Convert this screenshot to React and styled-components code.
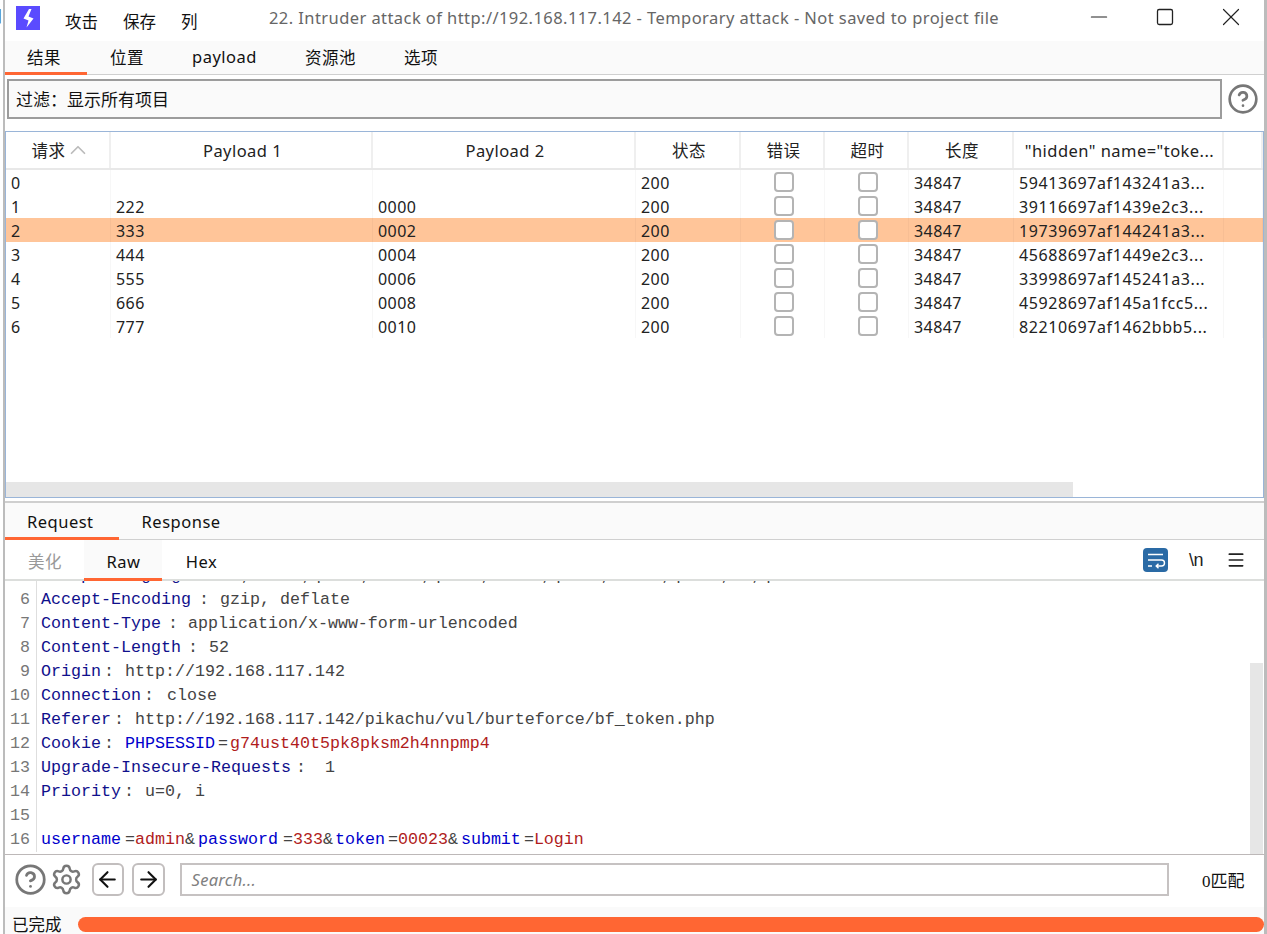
import React from 'react';
import styled, { createGlobalStyle } from 'styled-components';
import { ArrowLeft, ArrowRight, ChevronUp, CircleHelp, Menu, Minus, Settings, Square, X } from 'lucide-react';

const UI_FONT = '"Noto Sans", "Noto Sans CJK SC", sans-serif';
const ORANGE = '#ff6633';

const rows = [
    ['0', '', '', '59413697af143241a3...'],
    ['1', '222', '0000', '39116697af1439e2c3...'],
    ['2', '333', '0002', '19739697af144241a3...'],
    ['3', '444', '0004', '45688697af1449e2c3...'],
    ['4', '555', '0006', '33998697af145241a3...'],
    ['5', '666', '0008', '45928697af145a1fcc5...'],
    ['6', '777', '0010', '82210697af1462bbb5...'],
];

const headers = [
    { id: 'req', label: '请求', sort: true },
    { id: 'p1', label: 'Payload 1' },
    { id: 'p2', label: 'Payload 2' },
    { id: 'status', label: '状态' },
    { id: 'err', label: '错误' },
    { id: 'timeout', label: '超时' },
    { id: 'len', label: '长度' },
    { id: 'token', label: '"hidden" name="toke...' },
    { id: 'rest', label: '' },
];

const headerLines = [
    { n: 6, key: 'Accept-Encoding', gap: 29, indent: 8, value: 'gzip, deflate' },
    { n: 7, key: 'Content-Type', gap: 27, indent: 7, value: 'application/x-www-form-urlencoded' },
    { n: 8, key: 'Content-Length', gap: 28, indent: 7, value: '52' },
    { n: 9, key: 'Origin', gap: 24, indent: 3, value: 'http://192.168.117.142' },
    { n: 10, key: 'Connection', gap: 26, indent: 3, value: 'close' },
    { n: 11, key: 'Referer', gap: 24, indent: 3, value: 'http://192.168.117.142/pikachu/vul/burteforce/bf_token.php' },
];

const GlobalStyle = createGlobalStyle`
    html, body {
        margin: 0;
        padding: 0;
        background: #ffffff;
    }
`;

const Page = styled.div`
    width: 1267px;
    height: 934px;
    overflow: hidden;
    display: flex;
    position: relative;
    font-family: ${UI_FONT};
    color: #111;
    background: #fff;
`;

const BehindText = styled.span`
    position: absolute;
    left: -13px;
    top: 3px;
    font-size: 16px;
    color: #222;
`;

const Window = styled.div`
    margin-left: 3px;
    width: 1259px;
    flex: none;
    border-left: 2px solid #bcbcbc;
    border-right: 3px solid #bcbcbc;
    display: flex;
    flex-direction: column;
    height: 934px;
    position: relative;
    background: #fff;
`;

const TitleBar = styled.div`
    height: 41px;
    flex: none;
    display: flex;
    align-items: center;
    position: relative;
    background: #fff;
`;

const Logo = styled.svg`
    width: 24px;
    height: 24px;
    margin: -6px 0 0 11px;
    flex: none;
`;

const MenuList = styled.div`
    display: flex;
    gap: 25px;
    margin-left: 25px;
    font-size: 16.5px;
`;

const Title = styled.div`
    position: absolute;
    left: 264px;
    top: 6px;
    font-size: 16.5px;
    line-height: 24px;
    letter-spacing: 0.425px;
    color: #666;
    white-space: nowrap;
`;

const WindowControls = styled.div`
    position: absolute;
    top: 0;
    right: 0;
    display: flex;
    height: 33px;
    color: #222;
`;

const ControlSlot = styled.div`
    width: 66px;
    display: flex;
    align-items: center;
    justify-content: center;
`;

const TabBar = styled.div`
    flex: none;
    display: flex;
    box-sizing: border-box;
    background: #fafafa;
    border-bottom: 1px solid #d0d0d0;
    height: ${(p) => p.$height}px;
`;

const Tab = styled.div`
    display: flex;
    align-items: center;
    box-sizing: border-box;
    padding: ${(p) => p.$pad};
    font-size: 16.5px;
    letter-spacing: 0.5px;
    white-space: nowrap;
    margin-bottom: -1px;
    border-bottom: 3px solid ${(p) => (p.$active ? ORANGE : 'transparent')};
`;

const FilterRow = styled.div`
    flex: none;
    height: 56px;
    display: flex;
    padding: 4px 5px 0 2px;
    box-sizing: border-box;
    gap: 5px;
    background: #fff;
`;

const FilterBox = styled.div`
    flex: 1;
    height: 40px;
    box-sizing: border-box;
    border: 2px solid #9c9c9c;
    background: #fafafa;
    display: flex;
    align-items: center;
    padding: 0 0 1px 7px;
    font-size: 17px;
`;

const HelpIcon = styled(CircleHelp)`
    color: #777;
    flex: none;
    margin-top: 4px;
`;

const Table = styled.div`
    flex: none;
    height: 367px;
    box-sizing: border-box;
    border: 1px solid #9ab5d8;
    display: flex;
    flex-direction: column;
    background: #fff;
`;

const GRID = '105px 262px 263px 105px 84px 84px 105px 210px 1fr';

const HeaderRow = styled.div`
    flex: none;
    height: 38px;
    display: grid;
    grid-template-columns: ${GRID};
    border-bottom: 2px solid #e8e8e8;
    box-sizing: border-box;
`;

const HeaderCell = styled.div`
    display: flex;
    align-items: center;
    justify-content: center;
    box-sizing: border-box;
    padding-left: ${(p) => (p.$sort ? '8px' : '3px')};
    font-size: 16.5px;
    letter-spacing: 0.45px;
    border-right: 2px solid #efefef;
    white-space: nowrap;
    overflow: hidden;
    color: #222;
`;

const TableBody = styled.div`
    flex: 1;
    position: relative;
`;

const Row = styled.div`
    height: 24px;
    display: grid;
    grid-template-columns: ${GRID};
    align-items: center;
    background: ${(p) => (p.$selected ? '#ffc599' : '#fff')};
`;

const Cell = styled.div`
    height: 24px;
    padding: 2px 0 0 5px;
    font-size: 16px;
    letter-spacing: ${(p) => (p.$wide ? '0.6px' : '0.42px')};
    white-space: nowrap;
    overflow: hidden;
    color: #222;
    box-sizing: border-box;
    display: flex;
    justify-content: ${(p) => (p.$center ? 'center' : 'flex-start')};
    align-items: center;
    border-right: 1px solid rgba(0, 0, 0, 0.03);
`;

const Check = styled.span`
    width: 20px;
    height: 20px;
    box-sizing: border-box;
    border: 2px solid #b4b4b4;
    border-radius: 4px;
    background: #fff;
    margin: -2px 2px 0 0;
`;

const HScroll = styled.div`
    position: absolute;
    left: 0;
    bottom: 0;
    width: 1067px;
    height: 15px;
    background: #e6e6e6;
`;

const Divider = styled.div`
    flex: none;
    height: 5px;
    border-bottom: 2px solid #cfcfcf;
    box-sizing: border-box;
    background: #fff;
`;

const SubBar = styled.div`
    flex: none;
    height: 41px;
    display: flex;
    align-items: stretch;
    box-sizing: border-box;
    border-bottom: 2px solid #dcdedc;
    background: #fff;
    position: relative;
`;

const SubTab = styled.div`
    display: flex;
    align-items: center;
    box-sizing: border-box;
    width: ${(p) => p.$w}px;
    justify-content: center;
    padding: 4px 0 0 1px;
    font-size: 16.5px;
    letter-spacing: 0.5px;
    margin-bottom: -2px;
    color: ${(p) => (p.$muted ? '#999' : '#111')};
    background: ${(p) => (p.$active ? '#fafafa' : 'transparent')};
    border-bottom: 3px solid ${(p) => (p.$active ? ORANGE : 'transparent')};
`;

const EditorTools = styled.div`
    position: absolute;
    right: 18px;
    top: 8px;
    display: flex;
    align-items: center;
    gap: 21px;
`;

const NewlineGlyph = styled.span`
    font-family: "Liberation Sans", sans-serif;
    font-size: 18px;
    letter-spacing: -0.5px;
    color: #222;
    width: 16px;
`;

const Wrap = styled.svg`
    width: 25px;
    height: 24px;
    flex: none;
`;

const Editor = styled.div`
    flex: none;
    height: 274px;
    overflow: hidden;
    position: relative;
    border-bottom: 1px solid #bdb8b8;
    box-sizing: border-box;
    background: #fff;
`;

const CodeScroll = styled.div`
    margin-top: -17px;
    font-family: "Liberation Mono", monospace;
    font-size: 16.67px;
`;

const CodeLine = styled.div`
    height: 24px;
    line-height: 24px;
    display: flex;
    white-space: pre;
`;

const LineNo = styled.span`
    width: 32px;
    flex: none;
    padding-right: 6px;
    box-sizing: border-box;
    text-align: right;
    color: #777;
    border-right: 1px solid #dedede;
    margin-right: 4px;
`;

const Token = styled.span`
    color: ${(p) => p.$color};
    display: inline-block;
    width: ${(p) => (p.$w ? `${p.$w}px` : 'auto')};
    padding-left: ${(p) => p.$indent || 0}px;
    box-sizing: border-box;
`;

const VScroll = styled.div`
    position: absolute;
    right: 1px;
    bottom: 0;
    width: 13px;
    height: 191px;
    background: #e6e6e6;
`;

const SearchRow = styled.div`
    flex: none;
    height: 52px;
    display: flex;
    align-items: center;
    background: #fff;
    padding: 0 0 3px 8.5px;
    box-sizing: border-box;
`;

const IconGroup = styled.div`
    display: flex;
    align-items: center;
    gap: 3px;
    color: #777;
    margin-right: 9px;
`;

const NavButton = styled.div`
    width: 32.5px;
    height: 33px;
    box-sizing: border-box;
    border: 2px solid #c2bebe;
    border-radius: 6px;
    display: flex;
    align-items: center;
    justify-content: center;
    margin-right: 8px;
    color: #111;
`;

const SearchInput = styled.div`
    width: 989.5px;
    height: 33px;
    margin-left: 7px;
    box-sizing: border-box;
    border: 2px solid #c6c2c2;
    display: flex;
    align-items: center;
    padding-left: 10px;
    font-style: italic;
    font-size: 16.5px;
    letter-spacing: 0.3px;
    color: #808080;
`;

const MatchCount = styled.div`
    margin-left: 33px;
    font-size: 17px;
    white-space: nowrap;
    font-family: "Liberation Serif", "Noto Sans CJK SC", serif;
`;

const StatusBar = styled.div`
    flex: 1;
    display: flex;
    align-items: flex-start;
    background: #fafafa;
    padding: 10px 0 0 7px;
    box-sizing: border-box;
`;

const StatusText = styled.div`
    font-size: 16.5px;
    line-height: 20px;
    width: 66px;
    flex: none;
    margin-top: -2px;
`;

const Progress = styled.div`
    flex: 1;
    height: 15px;
    border-radius: 8px;
    background: ${ORANGE};
`;

const App = () => {
    return (
        <>
            <GlobalStyle />
            <Page>
                <BehindText>目</BehindText>
                <Window>
                    <TitleBar>
                        <Logo viewBox="0 0 24 24">
                            <rect width="24" height="24" fill="#5a4bff" />
                            <polygon points="13,3 15.5,3 12.5,10.5 17.5,12.5 10.5,21.5 12.5,14.5 7.5,12.5" fill="#fff" />
                        </Logo>
                        <MenuList>
                            <span>攻击</span>
                            <span>保存</span>
                            <span>列</span>
                        </MenuList>
                        <Title>22. Intruder attack of http://192.168.117.142 - Temporary attack - Not saved to project file</Title>
                        <WindowControls>
                            <ControlSlot><Minus size={26} strokeWidth={1.2} absoluteStrokeWidth /></ControlSlot>
                            <ControlSlot><Square size={20} strokeWidth={1.3} absoluteStrokeWidth /></ControlSlot>
                            <ControlSlot><X size={30} strokeWidth={1.2} absoluteStrokeWidth /></ControlSlot>
                        </WindowControls>
                    </TitleBar>

                    <TabBar $height={34}>
                        <Tab $active $pad="1px 26px 0 22px">结果</Tab>
                        <Tab $pad="1px 24px 0 23px">位置</Tab>
                        <Tab $pad="1px 24px">payload</Tab>
                        <Tab $pad="1px 24px">资源池</Tab>
                        <Tab $pad="1px 24px">选项</Tab>
                    </TabBar>

                    <FilterRow>
                        <FilterBox>过滤：显示所有项目</FilterBox>
                        <HelpIcon size={32} strokeWidth={2} />
                    </FilterRow>

                    <Table>
                        <HeaderRow>
                            {headers.map((h) => (
                                <HeaderCell key={h.id} $sort={h.sort}>
                                    {h.label}
                                    {h.sort && <ChevronUp size={26} color="#bbb" strokeWidth={1.6} />}
                                </HeaderCell>
                            ))}
                        </HeaderRow>
                        <TableBody>
                            {rows.map((r, i) => (
                                <Row key={r[0]} $selected={i === 2}>
                                    <Cell>{r[0]}</Cell>
                                    <Cell>{r[1]}</Cell>
                                    <Cell>{r[2]}</Cell>
                                    <Cell>200</Cell>
                                    <Cell $center><Check /></Cell>
                                    <Cell $center><Check /></Cell>
                                    <Cell>34847</Cell>
                                    <Cell $wide>{r[3]}</Cell>
                                    <Cell />
                                </Row>
                            ))}
                            <HScroll />
                        </TableBody>
                    </Table>

                    <Divider />

                    <TabBar $height={37}>
                        <Tab $active $pad="2px 25px 0 22px">Request</Tab>
                        <Tab $pad="2px 23px 0">Response</Tab>
                    </TabBar>

                    <SubBar>
                        <SubTab $muted $w={79}>美化</SubTab>
                        <SubTab $active $w={78}>Raw</SubTab>
                        <SubTab $w={78}>Hex</SubTab>
                        <EditorTools>
                            <Wrap viewBox="0 0 25 24">
                                <rect width="25" height="24" rx="4" fill="#2a6aa5" />
                                <path d="M5 6.5h15M5 12h13.5a3 3 0 0 1 0 6H13.5M15.5 15.8l-2.3 2.2 2.3 2.2M5 18h4" fill="none" stroke="#fff" strokeWidth="1.4" />
                            </Wrap>
                            <NewlineGlyph>\n</NewlineGlyph>
                            <Menu size={20} strokeWidth={2} color="#222" />
                        </EditorTools>
                    </SubBar>

                    <Editor>
                        <CodeScroll>
                            <CodeLine>
                                <LineNo>5</LineNo>
                                <Token $color="#10108c">Accept-Language</Token>
                                <Token $color="#444" $w={30} $indent={8}>:</Token>
                                <Token $color="#444">zh,zh-CN;q=0.9,zh-TW;q=0.8,zh-HK;q=0.7,en-US;q=0.6,en;q=0.5</Token>
                            </CodeLine>
                            {headerLines.map((l) => (
                                <CodeLine key={l.n}>
                                    <LineNo>{l.n}</LineNo>
                                    <Token $color="#10108c">{l.key}</Token>
                                    <Token $color="#444" $w={l.gap} $indent={l.indent}>:</Token>
                                    <Token $color="#444">{l.value}</Token>
                                </CodeLine>
                            ))}
                            <CodeLine>
                                <LineNo>12</LineNo>
                                <Token $color="#10108c">Cookie</Token>
                                <Token $color="#444" $w={24} $indent={3}>:</Token>
                                <Token $color="#0000cc">PHPSESSID</Token>
                                <Token $color="#444" $w={15} $indent={3}>=</Token>
                                <Token $color="#b01c1c">g74ust40t5pk8pksm2h4nnpmp4</Token>
                            </CodeLine>
                            <CodeLine>
                                <LineNo>13</LineNo>
                                <Token $color="#10108c">Upgrade-Insecure-Requests</Token>
                                <Token $color="#444" $w={34} $indent={5}>:</Token>
                                <Token $color="#444">1</Token>
                            </CodeLine>
                            <CodeLine>
                                <LineNo>14</LineNo>
                                <Token $color="#10108c">Priority</Token>
                                <Token $color="#444" $w={24} $indent={3}>:</Token>
                                <Token $color="#444">u=0, i</Token>
                            </CodeLine>
                            <CodeLine>
                                <LineNo>15</LineNo>
                            </CodeLine>
                            <CodeLine>
                                <LineNo>16</LineNo>
                                <Token $color="#0000cc">username</Token>
                                <Token $color="#444" $w={14} $indent={4}>=</Token>
                                <Token $color="#b01c1c">admin</Token>
                                <Token $color="#444" $w={13}>&amp;</Token>
                                <Token $color="#0000cc">password</Token>
                                <Token $color="#444" $w={15} $indent={5}>=</Token>
                                <Token $color="#b01c1c">333</Token>
                                <Token $color="#444" $w={12}>&amp;</Token>
                                <Token $color="#0000cc">token</Token>
                                <Token $color="#444" $w={13} $indent={3}>=</Token>
                                <Token $color="#b01c1c">00023</Token>
                                <Token $color="#444" $w={13}>&amp;</Token>
                                <Token $color="#0000cc">submit</Token>
                                <Token $color="#444" $w={13} $indent={3}>=</Token>
                                <Token $color="#b01c1c">Login</Token>
                            </CodeLine>
                        </CodeScroll>
                        <VScroll />
                    </Editor>

                    <SearchRow>
                        <IconGroup>
                            <CircleHelp size={33} strokeWidth={2} />
                            <Settings size={33} strokeWidth={1.8} />
                        </IconGroup>
                        <NavButton><ArrowLeft size={25} strokeWidth={2} /></NavButton>
                        <NavButton><ArrowRight size={25} strokeWidth={2} /></NavButton>
                        <SearchInput>Search...</SearchInput>
                        <MatchCount>0匹配</MatchCount>
                    </SearchRow>

                    <StatusBar>
                        <StatusText>已完成</StatusText>
                        <Progress />
                    </StatusBar>
                </Window>
            </Page>
        </>
    );
};

export default App;
